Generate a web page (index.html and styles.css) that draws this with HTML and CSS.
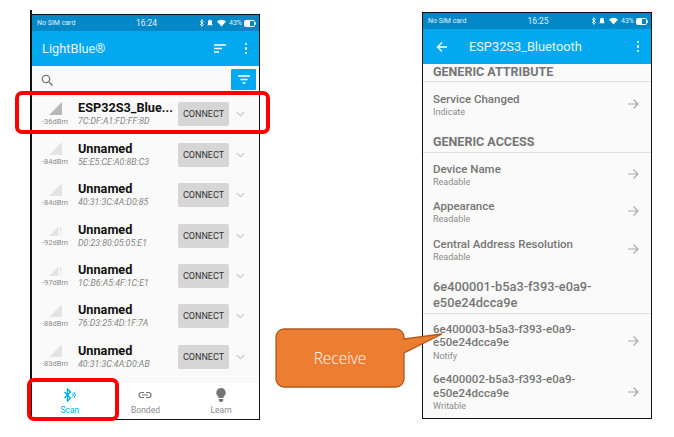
FILE: index.html
```html
<!DOCTYPE html>
<html lang="en">
<head>
    <meta charset="UTF-8">
    <meta name="viewport" content="width=device-width, initial-scale=1.0">
    <link rel="stylesheet" href="styles.css">
    <title>LightBlue scan and services</title>
</head>
<body>
<svg class="defs" width="0" height="0">
    <symbol id="chev" viewBox="0 0 10 6"><path d="M1 1l4 4 4-4" fill="none" stroke="#9e9e9e" stroke-width="1"/></symbol>
    <symbol id="arrow" viewBox="0 0 12 12"><path d="M1 6h10M6.500 1.500L11 6l-4.500 4.500" fill="none" stroke="#a8a8a8" stroke-width="1.100"/></symbol>
    <symbol id="status" viewBox="0 0 28 8">
        <path d="M1 2l3.500 3.500L2.700 7.500V.5L4.500 2.500 1 6" fill="none" stroke="#fff" stroke-width=".8"/>
        <path d="M11 .8a2 2 0 0 1 2 2v2.500l1 1H8l1-1V2.800a2 2 0 0 1 2-2z" fill="#fff"/>
        <path d="M18 2.500a6.500 6.500 0 0 1 9 0l-4.500 5z" fill="#fff"/>
    </symbol>
    <symbol id="battery" viewBox="0 0 12 7">
        <rect x=".5" y=".5" width="10" height="6" rx="1" fill="none" stroke="#fff"/>
        <rect x="1" y="1" width="5" height="5" fill="#fff"/>
        <rect x="11" y="2.500" width="1" height="2" fill="#fff"/>
    </symbol>
</svg>

<div class="canvas">
    <section class="phone phone-scan">
        <div class="status">
            <span>No SIM card</span><span class="clock">16:24</span>
            <span class="status-right"><svg class="status-icons"><use href="#status"/></svg><span>43%</span><svg class="battery"><use href="#battery"/></svg></span>
        </div>
        <header class="appbar">
            <h1>LightBlue®</h1>
            <svg class="sort" viewBox="0 0 12 9"><path d="M0 1h12M0 4.500h8M0 8h5" stroke="#fff" stroke-width="1.300"/></svg>
            <span class="dots"><i></i><i></i><i></i></span>
        </header>
        <div class="search">
            <svg class="glass" viewBox="0 0 12 12"><circle cx="5" cy="5" r="3.700" fill="none" stroke="#757575" stroke-width="1.300"/><path d="M8 8l3.500 3.500" stroke="#757575" stroke-width="1.400"/></svg>
            <span class="filter"><svg viewBox="0 0 12 9"><path d="M0 1h12M2.500 4.500h7M4.500 8h3" stroke="#fff" stroke-width="1.300"/></svg></span>
        </div>
        <div class="devices">
            <div class="device">
                <div class="rssi"><svg class="sig strong" viewBox="0 0 13 13"><path d="M13 0v13H0z"/></svg><span>-36dBm</span></div>
                <div class="info"><b>ESP32S3_Blue...</b><em>7C:DF:A1:FD:FF:8D</em></div>
                <span class="connect">CONNECT</span><svg class="chev"><use href="#chev"/></svg>
            </div>
            <div class="device">
                <div class="rssi"><svg class="sig" viewBox="0 0 13 13"><path d="M13 0v13H0z"/></svg><span>-84dBm</span></div>
                <div class="info"><b>Unnamed</b><em>5E:E5:CE:A0:8B:C3</em></div>
                <span class="connect">CONNECT</span><svg class="chev"><use href="#chev"/></svg>
            </div>
            <div class="device">
                <div class="rssi"><svg class="sig" viewBox="0 0 13 13"><path d="M13 0v13H0z"/></svg><span>-84dBm</span></div>
                <div class="info"><b>Unnamed</b><em>40:31:3C:4A:D0:85</em></div>
                <span class="connect">CONNECT</span><svg class="chev"><use href="#chev"/></svg>
            </div>
            <div class="device">
                <div class="rssi"><svg class="sig" viewBox="0 0 13 13"><path d="M9.500 3.500V13H0zM11 4h1.500l-.3 5.500h-.9zM11.100 10.800h1.200V13h-1.200z"/></svg><span>-92dBm</span></div>
                <div class="info"><b>Unnamed</b><em>D0:23:80:05:05:E1</em></div>
                <span class="connect">CONNECT</span><svg class="chev"><use href="#chev"/></svg>
            </div>
            <div class="device">
                <div class="rssi"><svg class="sig" viewBox="0 0 13 13"><path d="M9.500 3.500V13H0zM11 4h1.500l-.3 5.500h-.9zM11.100 10.800h1.200V13h-1.200z"/></svg><span>-97dBm</span></div>
                <div class="info"><b>Unnamed</b><em>1C:B6:A5:4F:1C:E1</em></div>
                <span class="connect">CONNECT</span><svg class="chev"><use href="#chev"/></svg>
            </div>
            <div class="device">
                <div class="rssi"><svg class="sig" viewBox="0 0 13 13"><path d="M13 0v13H0z"/></svg><span>-88dBm</span></div>
                <div class="info"><b>Unnamed</b><em>76:D3:25:4D:1F:7A</em></div>
                <span class="connect">CONNECT</span><svg class="chev"><use href="#chev"/></svg>
            </div>
            <div class="device">
                <div class="rssi"><svg class="sig" viewBox="0 0 13 13"><path d="M13 0v13H0z"/></svg><span>-83dBm</span></div>
                <div class="info"><b>Unnamed</b><em>40:31:3C:4A:D0:AB</em></div>
                <span class="connect">CONNECT</span><svg class="chev"><use href="#chev"/></svg>
            </div>
        </div>
        <nav class="tabs">
            <div class="tab active">
                <svg viewBox="0 0 14 14"><path d="M1.500 4l6 6-3 3V1l3 3-6 6" fill="none" stroke="#03a9f4" stroke-width="1.400"/><path d="M9.500 5.500a2 2 0 0 1 0 3M11 4a4.500 4.500 0 0 1 0 6" fill="none" stroke="#03a9f4"/></svg>
                <span>Scan</span>
            </div>
            <div class="tab">
                <svg viewBox="0 0 14 14"><path d="M6 4.500H3.500a2.500 2.500 0 0 0 0 5H6M8 4.500h2.500a2.500 2.500 0 0 1 0 5H8M4 7h6" fill="none" stroke="#757575" stroke-width="1.200"/></svg>
                <span>Bonded</span>
            </div>
            <div class="tab">
                <svg viewBox="0 0 14 14"><path d="M7 0a4.700 4.700 0 0 1 2.600 8.600V10H4.400V8.600A4.700 4.700 0 0 1 7 0zM4.700 11h4.600v1.200L8 14H6l-1.300-1.800z" fill="#757575"/></svg>
                <span>Learn</span>
            </div>
        </nav>
    </section>

    <section class="phone phone-detail">
        <div class="status">
            <span>No SIM card</span><span class="clock">16:25</span>
            <span class="status-right"><svg class="status-icons"><use href="#status"/></svg><span>43%</span><svg class="battery"><use href="#battery"/></svg></span>
        </div>
        <header class="appbar">
            <svg class="back" viewBox="0 0 12 12"><path d="M11 6H1.500M6 1.500L1.500 6 6 10.500" fill="none" stroke="#fff" stroke-width="1.300"/></svg>
            <h2>ESP32S3_Bluetooth</h2>
            <span class="dots"><i></i><i></i><i></i></span>
        </header>
        <div class="services">
            <h3 class="group first">GENERIC ATTRIBUTE</h3>
            <div class="char c-service"><div><b>Service Changed</b><small>Indicate</small></div><svg class="go"><use href="#arrow"/></svg></div>
            <h3 class="group second">GENERIC ACCESS</h3>
            <div class="char"><div><b>Device Name</b><small>Readable</small></div><svg class="go"><use href="#arrow"/></svg></div>
            <div class="char"><div><b>Appearance</b><small>Readable</small></div><svg class="go"><use href="#arrow"/></svg></div>
            <div class="char"><div><b>Central Address Resolution</b><small>Readable</small></div><svg class="go"><use href="#arrow"/></svg></div>
            <h3 class="group uuid">6e400001-b5a3-f393-e0a9-<br>e50e24dcca9e</h3>
            <div class="char tall"><div><b>6e400003-b5a3-f393-e0a9-<br>e50e24dcca9e</b><small>Notify</small></div><svg class="go"><use href="#arrow"/></svg></div>
            <div class="char tall"><div><b>6e400002-b5a3-f393-e0a9-<br>e50e24dcca9e</b><small>Writable</small></div><svg class="go"><use href="#arrow"/></svg></div>
        </div>
    </section>

    <!-- annotations drawn over the screenshots -->
    <div class="edge"></div>
    <div class="mark mark-device"></div>
    <div class="mark mark-tab"></div>
    <div class="callout">
        <svg viewBox="0 0 170 60" width="170" height="60"><path d="M9 1h112a8 8 0 0 1 8 8v2l38-5-38 19v26a8 8 0 0 1-8 8H9a8 8 0 0 1-8-8V9a8 8 0 0 1 8-8z" fill="#ed7d31" stroke="#ae5a21" stroke-width="1.300"/></svg>
        <span>Receive</span>
    </div>
</div>
</body>
</html>
```

FILE: styles.css
```css
* {
    box-sizing: border-box;
}

body {
    margin: 0;
    background: #fff;
    font-family: Roboto, "Liberation Sans", sans-serif;
}

.defs {
    display: block;
    height: 0;
}

.canvas {
    position: relative;
    width: 674px;
    height: 437px;
    display: flex;
    align-items: flex-start;
    overflow: hidden;
}

.phone {
    background: #fafafa;
    border: 1px solid #111;
    display: flex;
    flex-direction: column;
    overflow: hidden;
}

.phone-scan {
    width: 230px;
    height: 406px;
    margin: 14px 0 0 30px;
    border-left-width: 2px;
}

.phone-detail {
    width: 230px;
    height: 407px;
    margin: 12px 0 0 162px;
    border-width: 1.500px;
}

.status {
    height: 16px;
    flex: none;
    background: #0288c7;
    color: #e3f2fb;
    font-size: 7px;
    padding: 0 3px 0 5px;
    display: grid;
    grid-template-columns: 1fr auto 1fr;
    align-items: center;
}

.clock {
    font-size: 8.500px;
}

.status-right {
    display: flex;
    justify-content: flex-end;
    align-items: center;
    gap: 2px;
}

.status-icons {
    width: 28px;
    height: 8px;
}

.battery {
    width: 12px;
    height: 7px;
}

.appbar {
    height: 35px;
    flex: none;
    background: #03a9f0;
    color: #e8f6fd;
    display: flex;
    align-items: center;
    padding: 0 12px 0 10px;
}

.appbar h1 {
    margin: 0;
    font-size: 12.800px;
    font-weight: 400;
    flex: 1;
}

.appbar h2 {
    margin: 0 0 0 21px;
    font-size: 12.800px;
    font-weight: 400;
    flex: 1;
}

.sort {
    width: 12px;
    height: 9px;
    margin-right: 19px;
}

.dots {
    display: flex;
    flex-direction: column;
    gap: 2px;
}

.dots i {
    width: 2.500px;
    height: 2.500px;
    background: #fff;
    border-radius: 50%;
}

.back {
    width: 12px;
    height: 12px;
    margin-left: 3px;
}

.search {
    height: 27px;
    flex: none;
    display: flex;
    align-items: center;
    justify-content: space-between;
    padding: 0 3px 0 9px;
}

.glass {
    width: 12px;
    height: 12px;
}

.filter {
    width: 25px;
    height: 21px;
    background: #03a9f0;
    border-radius: 1px;
    display: flex;
    align-items: center;
    justify-content: center;
}

.filter svg {
    width: 12px;
    height: 9px;
}

.devices {
    flex: 1;
    padding-top: 1px;
}

.device {
    height: 40.450px;
    display: flex;
    align-items: center;
}

.rssi {
    width: 46px;
    display: flex;
    flex-direction: column;
    align-items: center;
    font-size: 7.500px;
    color: #8a8a8a;
}

.sig {
    width: 13px;
    height: 13px;
    margin: -1px 0 2px 1px;
    fill: #e4e4e4;
}

.sig.strong {
    fill: #b8b8b8;
}

.info {
    width: 100px;
    display: flex;
    flex-direction: column;
}

.info b {
    font-size: 12.700px;
    line-height: 15px;
    color: #111;
    font-weight: 700;
    white-space: nowrap;
}

.info em {
    font-size: 8.800px;
    line-height: 13px;
    color: #858585;
}

.connect {
    width: 51px;
    height: 24px;
    flex: none;
    background: #d6d6d6;
    border-radius: 2px;
    color: #333;
    font-size: 9px;
    font-weight: 400;
    display: flex;
    align-items: center;
    justify-content: center;
}

.chev {
    width: 9px;
    height: 6px;
    margin-left: 7px;
}

.tabs {
    height: 36px;
    flex: none;
    background: #fff;
    display: grid;
    grid-template-columns: 1fr 1fr 1fr;
}

.tab {
    display: flex;
    flex-direction: column;
    align-items: center;
    font-size: 8.500px;
    color: #8c8c8c;
    padding-top: 5px;
}

.tab svg {
    width: 14px;
    height: 14px;
    margin-bottom: 3px;
}

.tab.active {
    color: #03a9f4;
}

.services {
    flex: 1;
    padding-left: 10px;
    color: #757575;
}

.group {
    margin: 0 0 0 -10px;
    padding-left: 10px;
    border-bottom: 1.500px solid #e0e0e0;
    font-size: 12.500px;
    font-weight: 700;
}

.group.first {
    height: 18px;
    line-height: 15px;
}

.group.second {
    height: 25px;
    line-height: 27px;
}

.group.second + .char {
    margin-top: 3.500px;
}

.group.uuid {
    font-size: 12.800px;
    line-height: 16px;
    font-weight: 500;
    margin-top: 9.500px;
    padding-bottom: 2px;
}

.group.uuid + .char {
    margin-top: 3.750px;
}

.char {
    display: flex;
    align-items: center;
    justify-content: space-between;
    height: 37.500px;
    padding-right: 12px;
}

.c-service {
    height: 46px;
}

.char b {
    display: block;
    font-size: 11.500px;
    line-height: 14px;
    font-weight: 500;
}

.char small {
    display: block;
    font-size: 9px;
    line-height: 13px;
    color: #8a8a8a;
}

.char.tall {
    height: 50.500px;
}

.char.tall b {
    line-height: 13.500px;
}

.go {
    width: 12px;
    height: 12px;
    margin-bottom: 3px;
}

/* annotations */
.edge {
    position: absolute;
    left: 30px;
    top: 10px;
    width: 2px;
    height: 4px;
    background: #111;
}

.mark {
    position: absolute;
    border: 4px solid #f00;
    border-radius: 7px;
}

.mark-device {
    left: 15px;
    top: 91px;
    width: 255px;
    height: 43px;
}

.mark-tab {
    left: 27px;
    top: 378px;
    width: 92px;
    height: 43px;
}

.callout {
    position: absolute;
    left: 275px;
    top: 328px;
    width: 170px;
    height: 60px;
}

.callout svg {
    display: block;
}

.callout span {
    position: absolute;
    left: 0;
    top: 19px;
    width: 130px;
    text-align: center;
    color: #fff;
    font-family: "Open Sans", sans-serif;
    font-size: 15.500px;
    font-weight: 300;
    line-height: 22px;
}
```
